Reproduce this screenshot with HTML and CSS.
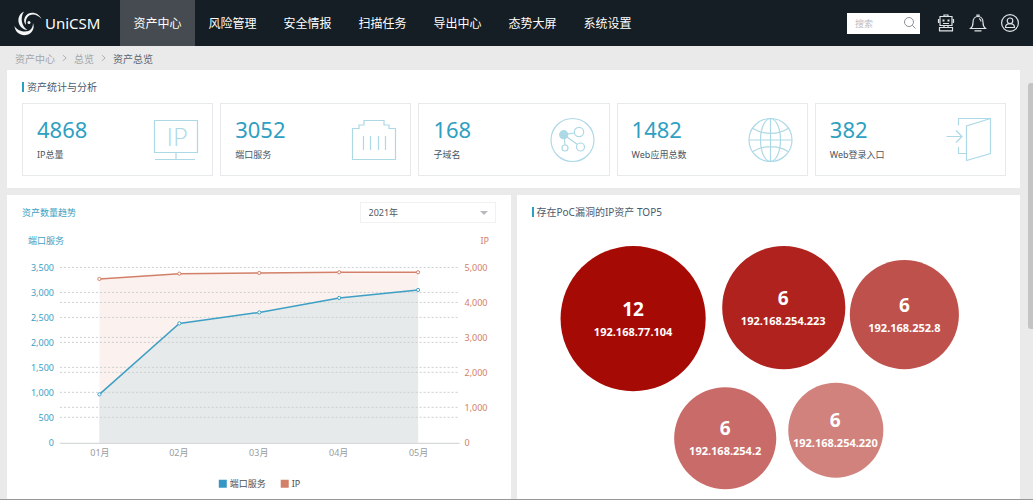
FILE: index.html
```
<!DOCTYPE html>
<html lang="zh-CN">
<head>
<meta charset="utf-8">
<title>UniCSM 资产总览</title>
<link rel="stylesheet" href="styles.css">
</head>
<body>
<div class="app">
  <header class="topbar">
    <a class="brand" href="#">
      <svg class="brand-mark" viewBox="0 0 28 26" aria-hidden="true">
        <path d="M10 1.500C4 4 2.500 12 7 17C9 19 11 20 13.500 20C8 17 5.500 8 10 1.500Z"/>
        <path d="M27.500 9C24 1 14 1 11 7C9.500 10 10 13 12 15C11 9 14 4.500 19 4.500C22 4.500 25 6 27.500 9Z"/>
        <path d="M0.500 16C1 24 10 27.500 16 23.500C19.500 21 20.500 17 19 13C19 18 16 21.500 11 21.500C7 21.500 3 20 0.500 16Z"/>
        <circle cx="15" cy="12.500" r="1.500"/>
      </svg>
      <span>UniCSM</span>
    </a>
    <nav class="nav">
      <a class="nav-item nav-item-active" href="#">资产中心</a>
      <a class="nav-item" href="#">风险管理</a>
      <a class="nav-item" href="#">安全情报</a>
      <a class="nav-item" href="#">扫描任务</a>
      <a class="nav-item" href="#">导出中心</a>
      <a class="nav-item" href="#">态势大屏</a>
      <a class="nav-item" href="#">系统设置</a>
    </nav>
    <div class="tools">
      <div class="search">
        <input class="search-input" type="text" placeholder="搜索" aria-label="搜索">
        <svg class="search-icon" viewBox="0 0 12 12" aria-hidden="true"><circle cx="5" cy="5" r="4.500"/><path d="M8.300 8.300L11.500 11.500"/></svg>
      </div>
      <button class="tool" type="button" aria-label="助手">
        <svg viewBox="0 0 18 18"><path d="M3 2.500H15V11.500H3ZM7 2.500V1h4v1.500M1.500 5v4M16.500 5v4M7 11.500v2M11 11.500v2M2.500 17v-3.500h2.500M15.500 17v-3.500H13M2 16.800h14M5 13.500h8M6 9.500h6"/><path class="dots" d="M5.500 5.500h2v2h-2zM10.500 5.500h2v2h-2z"/></svg>
      </button>
      <button class="tool" type="button" aria-label="通知">
        <svg viewBox="0 0 18 18"><path d="M1.500 14.500C4 12.500 4 11 4 8.500C4 5 6 2.500 9 2.500S14 5 14 8.500C14 11 14 12.500 16.500 14.500ZM8 2.500V1h2v1.500M5.500 16.800h7M10 4.500c1.200.5 2 1.500 2 3"/></svg>
      </button>
      <button class="tool" type="button" aria-label="用户">
        <svg viewBox="0 0 18 18"><circle cx="9" cy="9" r="8.400"/><circle cx="9" cy="6.800" r="2.800"/><path d="M4.500 13.500C4.500 11 6.500 9.600 9 9.600S13.500 11 13.500 13.500Z"/></svg>
      </button>
    </div>
  </header>

  <nav class="crumbs" aria-label="位置">
    <a href="#">资产中心</a>
    <svg viewBox="0 0 6 8" aria-hidden="true"><path d="M1 0.500L5 4L1 7.500"/></svg>
    <a href="#">总览</a>
    <svg viewBox="0 0 6 8" aria-hidden="true"><path d="M1 0.500L5 4L1 7.500"/></svg>
    <span class="crumb-current">资产总览</span>
  </nav>

  <main class="content">
    <section class="panel stats">
      <h2 class="panel-title">资产统计与分析</h2>
      <div class="stat-grid">
        <article class="stat">
          <div><div class="stat-value">4868</div><div class="stat-label">IP总量</div></div>
          <svg class="stat-icon" viewBox="0 0 46 46" aria-hidden="true"><path d="M1.500 3.500H44.500V35.500H1.500ZM23 35.500V42.500M2 42.500H42"/><text class="icon-text" x="24" y="29">IP</text></svg>
        </article>
        <article class="stat">
          <div><div class="stat-value">3052</div><div class="stat-label">端口服务</div></div>
          <svg class="stat-icon" viewBox="0 0 46 46" aria-hidden="true"><path d="M1.500 42.500V11.500H8V8H13V3.500H33V8H38V11.500H44.500V42.500ZM12.500 19V33M19.500 19V33M27.500 19V33M34.500 19V33"/></svg>
        </article>
        <article class="stat">
          <div><div class="stat-value">168</div><div class="stat-label">子域名</div></div>
          <svg class="stat-icon" viewBox="0 0 46 46" aria-hidden="true"><circle cx="22.500" cy="23" r="21.500"/><circle class="solid" cx="13.700" cy="17.700" r="4"/><circle cx="29" cy="15" r="4.700"/><circle cx="30.500" cy="30" r="4"/><circle cx="15" cy="31" r="3"/><path d="M13.700 17.700L24.500 16M13.700 17.700L27.500 27.500M14 17.700L15 28"/></svg>
        </article>
        <article class="stat">
          <div><div class="stat-value">1482</div><div class="stat-label">Web应用总数</div></div>
          <svg class="stat-icon" viewBox="0 0 46 46" aria-hidden="true"><circle cx="22.500" cy="23" r="21.500"/><ellipse cx="22.500" cy="23" rx="10" ry="21.500"/><path d="M22.500 1.500V44.500M1 23H44M5 11.500C15 18 30 18 40 11.500M5 34.500C15 28 30 28 40 34.500"/></svg>
        </article>
        <article class="stat">
          <div><div class="stat-value">382</div><div class="stat-label">Web登录入口</div></div>
          <svg class="stat-icon" viewBox="0 0 46 46" aria-hidden="true"><path d="M12.500 8.500V1.500H44.500V36.500L20.500 43.500V9L44.500 1.500M12.500 30V36.500H20.500M0.500 19.500H15.500M10 13.500L16 19.500L10 25.500"/></svg>
        </article>
      </div>
    </section>

    <div class="columns">
      <section class="panel">
        <div class="trend-head">
          <h2 class="trend-title">资产数量趋势</h2>
          <div class="year">
            <select class="year-select" aria-label="年份"><option>2021年</option><option>2020年</option></select>
            <svg class="year-arrow" viewBox="0 0 8 4" aria-hidden="true"><path d="M0 0H8L4 4Z"/></svg>
          </div>
        </div>
        <svg class="chart" viewBox="7 229 504 265" role="img" aria-label="资产数量趋势">
          <path class="area-ip" d="M99.500 279L179.500 273.700L259.500 273L339.500 272.300L418.500 272.300V443H99.500Z"/>
          <path class="area-port" d="M99.500 394.500L179.500 323.500L259.500 312.500L339.500 298L418.500 290V443H99.500Z"/>
          <path class="grid" d="M60 267.500H460M60 292.500H460M60 302.500H460M60 317.500H460M60 337.500H460M60 342.500H460M60 367.500H460M60 372.500H460M60 392.500H460M60 407.500H460M60 417.500H460"/>
          <path class="axis" d="M60 443.500H460"/>
          <polyline class="line-ip" points="99.500,279 179.500,273.700 259.500,273 339.500,272.300 418.500,272.300"/>
          <polyline class="line-port" points="99.500,394.500 179.500,323.500 259.500,312.500 339.500,298 418.500,290"/>
          <g class="dot-ip"><circle cx="99.500" cy="279" r="1.600"/><circle cx="179.500" cy="273.700" r="1.600"/><circle cx="259.500" cy="273" r="1.600"/><circle cx="339.500" cy="272.300" r="1.600"/><circle cx="418.500" cy="272.300" r="1.600"/></g>
          <g class="dot-port"><circle cx="99.500" cy="394.500" r="1.600"/><circle cx="179.500" cy="323.500" r="1.600"/><circle cx="259.500" cy="312.500" r="1.600"/><circle cx="339.500" cy="298" r="1.600"/><circle cx="418.500" cy="290" r="1.600"/></g>
          <g class="label-port">
            <text x="64" y="244">端口服务</text>
            <text x="54" y="271">3,500</text><text x="54" y="296">3,000</text><text x="54" y="321">2,500</text><text x="54" y="346">2,000</text><text x="54" y="371">1,500</text><text x="54" y="396">1,000</text><text x="54" y="421">500</text><text x="54" y="446">0</text>
          </g>
          <g class="label-ip">
            <text x="481" y="244">IP</text>
            <text x="465" y="271">5,000</text><text x="465" y="306">4,000</text><text x="465" y="341">3,000</text><text x="465" y="376">2,000</text><text x="465" y="411">1,000</text><text x="465" y="446">0</text>
          </g>
          <g class="label-month">
            <text x="100" y="456">01月</text><text x="179" y="456">02月</text><text x="259" y="456">03月</text><text x="339" y="456">04月</text><text x="419" y="456">05月</text>
          </g>
          <rect class="key-port" x="219" y="480" width="8" height="8"/><text class="key" x="230" y="487">端口服务</text>
          <rect class="key-ip" x="281" y="480" width="8" height="8"/><text class="key" x="292" y="487">IP</text>
        </svg>
      </section>

      <section class="panel">
        <h2 class="panel-title">存在PoC漏洞的IP资产 TOP5</h2>
        <svg class="bubbles" viewBox="517 228 503 265" role="img" aria-label="存在PoC漏洞的IP资产 TOP5">
          <circle cx="633" cy="318.500" r="72.500" fill="#a60a04"/><text class="count" x="633" y="316">12</text><text class="ip" x="633" y="336">192.168.77.104</text>
          <circle cx="783.500" cy="307.500" r="61.500" fill="#af221e"/><text class="count" x="783" y="305">6</text><text class="ip" x="783" y="325">192.168.254.223</text>
          <circle cx="904" cy="314.500" r="54.500" fill="#bf514c"/><text class="count" x="904" y="312">6</text><text class="ip" x="904" y="332">192.168.252.8</text>
          <circle cx="725" cy="438" r="51" fill="#c96b68"/><text class="count" x="725" y="435">6</text><text class="ip" x="725" y="455">192.168.254.2</text>
          <circle cx="835.500" cy="430" r="47.500" fill="#d1827d"/><text class="count" x="835" y="427">6</text><text class="ip" x="835" y="447">192.168.254.220</text>
        </svg>
      </section>
    </div>
  </main>
  <div class="scroll-thumb"></div>
</div>
</body>
</html>
```
FILE: styles.css
```
* { box-sizing: border-box; }
body {
  margin: 0;
  font-family: "Noto Sans", "Noto Sans CJK SC", sans-serif;
  font-size: 10px;
  color: #4a5560;
}
a { color: inherit; text-decoration: none; }
h2 { margin: 0; font-weight: 400; }
svg { display: block; }

.app {
  position: relative;
  display: flex;
  flex-direction: column;
  height: 100vh;
  overflow: hidden;
  background: #eaeaea;
  border-bottom: 1px solid #98989a;
}

.topbar {
  display: flex;
  flex: none;
  height: 46px;
  background: #141e24;
  color: #fff;
}
.brand {
  display: flex;
  align-items: center;
  gap: 3px;
  width: 120px;
  padding-left: 14px;
  font-size: 15px;
}
.brand-mark { width: 28px; height: 26px; fill: #f4f6f7; }
.nav { display: flex; }
.nav-item {
  width: 75px;
  padding-top: 1px;
  font-size: 12px;
  line-height: 45px;
  text-align: center;
}
.nav-item-active { background: #454b50; }
.tools {
  display: flex;
  align-items: center;
  gap: 14px;
  margin-left: auto;
  padding-right: 14px;
}
.search {
  display: flex;
  align-items: center;
  width: 73px;
  height: 21px;
  margin-right: 3px;
  padding: 0 4px 0 8px;
  background: #fff;
}
.search-input {
  flex: 1;
  min-width: 0;
  padding: 0;
  border: 0;
  outline: 0;
  background: none;
  font: inherit;
  font-size: 9px;
}
.search-input::placeholder { color: #b8bcc4; }
.search-icon { width: 12px; height: 12px; fill: none; stroke: #8c9094; }
.tool { padding: 0; border: 0; background: none; }
.tool svg { width: 18px; height: 18px; fill: none; stroke: #dfe3e6; stroke-width: 1.2; }
.tool .dots { fill: #dfe3e6; stroke: none; }

.crumbs {
  display: flex;
  flex: none;
  align-items: center;
  gap: 7px;
  height: 24px;
  padding-left: 15px;
  color: #a3a6aa;
}
.crumbs svg { width: 5px; height: 8px; fill: none; stroke: #a3a6aa; }
.crumb-current { color: #5a6570; }

.content {
  display: flex;
  flex: 1;
  flex-direction: column;
  gap: 7px;
  min-height: 0;
  padding: 0 13px 0 7px;
}
.panel { background: #fff; }
.panel-title {
  display: flex;
  align-items: center;
  gap: 3px;
  height: 33px;
  padding-left: 15px;
  color: #4a5a6c;
  font-size: 10px;
}
.panel-title::before {
  content: "";
  width: 2px;
  height: 10px;
  background: #2a9fc0;
}
.stats { padding-bottom: 12px; }
.stat-grid {
  display: grid;
  grid-template-columns: repeat(5, 1fr);
  gap: 7px;
  padding: 0 14px 0 15px;
}
.stat {
  display: flex;
  justify-content: space-between;
  align-items: center;
  height: 73px;
  padding: 0 13px 0 14px;
  border: 1px solid #e6eaea;
}
.stat-value { color: #2f9fc2; font-size: 22px; line-height: 30px; }
.stat-label { font-size: 9px; line-height: 22px; }
.stat-icon { width: 46px; height: 46px; fill: none; stroke: #add9e6; stroke-width: 1.2; }
.stat-icon .solid { fill: #add9e6; }
.icon-text { fill: #add9e6; stroke: none; font-family: Lato, sans-serif; font-size: 25px; font-weight: 300; text-anchor: middle; }

.columns {
  display: grid;
  flex: 1;
  grid-template-columns: 1fr 1fr;
  gap: 6px;
  min-height: 0;
}
.trend-head {
  display: flex;
  align-items: center;
  justify-content: space-between;
  height: 34px;
  padding: 0 15px;
}
.trend-title { color: #3d9fc4; font-size: 9px; }
.year { position: relative; width: 136px; }
.year-select {
  display: block;
  width: 100%;
  height: 21px;
  padding: 0 8px;
  appearance: none;
  border: 1px solid #f0f2f2;
  border-radius: 0;
  background: #fff;
  color: #50565c;
  font: inherit;
  font-size: 9px;
}
.year-arrow { position: absolute; top: 9px; right: 8px; width: 8px; height: 4px; fill: #b8babd; pointer-events: none; }

.chart, .bubbles { width: 100%; height: auto; }
.chart { font-size: 9px; }
.grid { fill: none; stroke: #ccd0d0; stroke-dasharray: 2 2; }
.axis { stroke: #ccd0d0; }
.area-ip { fill: #fbf1ee; }
.area-port { fill: #e7eaea; }
.line-ip, .line-port { fill: none; stroke-width: 1.5; }
.line-ip { stroke: #d28069; }
.line-port { stroke: #3d9fc4; }
.dot-ip, .dot-port { fill: #fff; }
.dot-ip { stroke: #d28069; }
.dot-port { stroke: #3d9fc4; }
.label-port { fill: #3d9fc4; text-anchor: end; }
.label-ip { fill: #d28069; }
.label-month { fill: #999c9f; text-anchor: middle; }
.key { fill: #4c4f52; }
.key-port { fill: #3797c4; }
.key-ip { fill: #d28069; }

.bubbles { fill: #fff; font-weight: 700; text-anchor: middle; }
.count { font-size: 19px; }
.ip { font-size: 11px; }

.scroll-thumb {
  position: absolute;
  top: 83px;
  right: 0;
  width: 5px;
  height: 246px;
  border-radius: 3px 0 0 3px;
  background: #c4c4c4;
}
```
